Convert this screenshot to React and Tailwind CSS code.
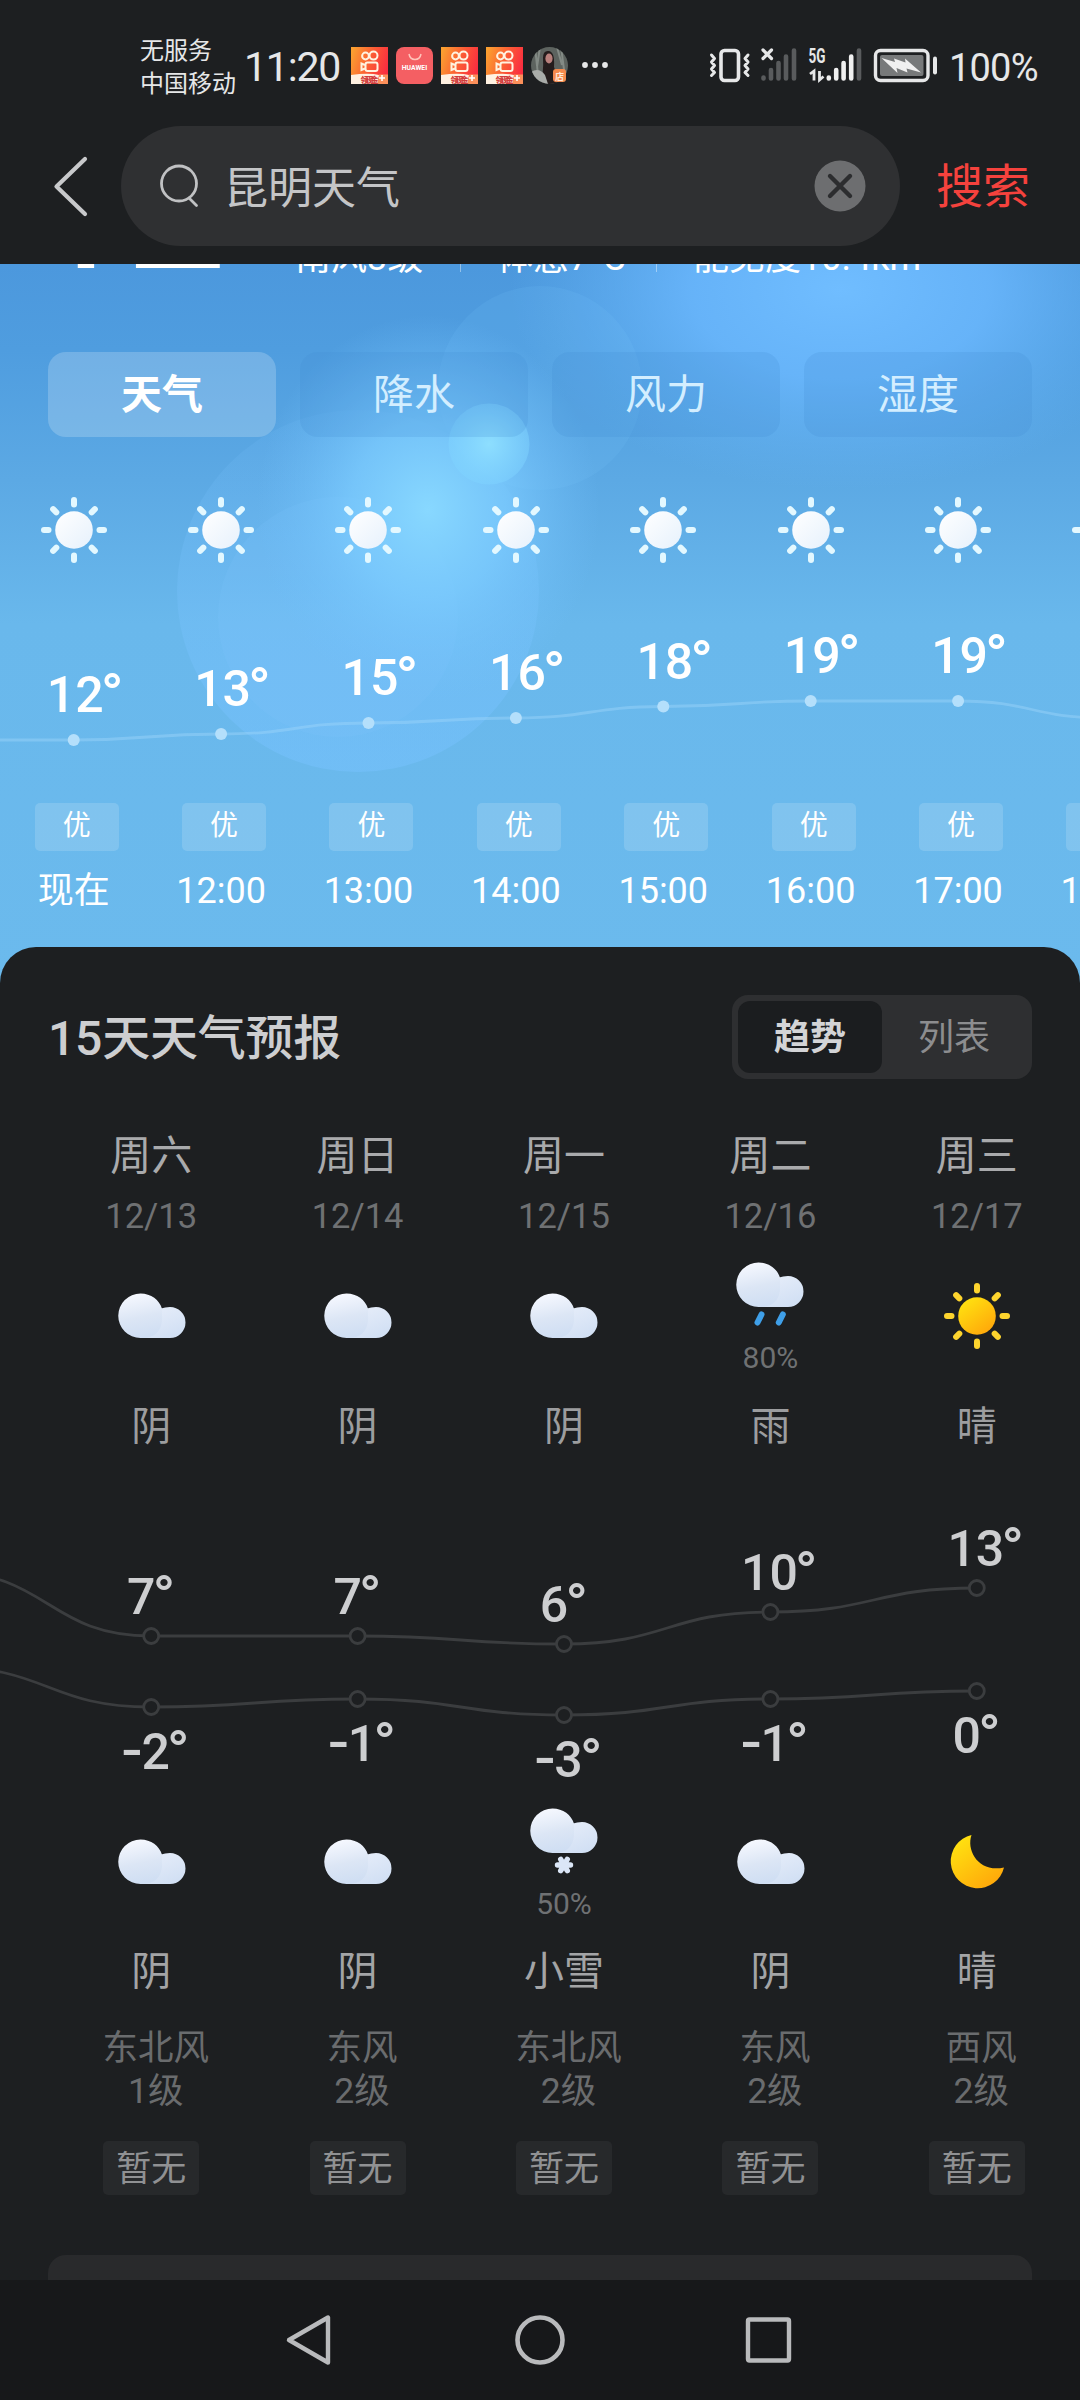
import React from "react";

const HOURS = [
  { time: "现在", temp: 12, y: 740 },
  { time: "12:00", temp: 13, y: 734 },
  { time: "13:00", temp: 15, y: 723 },
  { time: "14:00", temp: 16, y: 718 },
  { time: "15:00", temp: 18, y: 706.5 },
  { time: "16:00", temp: 19, y: 701 },
  { time: "17:00", temp: 19, y: 701 },
  { time: "18:00", temp: 16, y: 718 },
];
const HOUR_STEP = 147.4;

const DAYS = [
  { name: "周六", date: "12/13", day: "cloud", dayText: "阴", hi: "7", hiY: 1636, lo: "-2", loY: 1707, night: "cloud", nightText: "阴", wind: "东北风", level: "1级" },
  { name: "周日", date: "12/14", day: "cloud", dayText: "阴", hi: "7", hiY: 1636, lo: "-1", loY: 1699, night: "cloud", nightText: "阴", wind: "东风", level: "2级" },
  { name: "周一", date: "12/15", day: "cloud", dayText: "阴", hi: "6", hiY: 1644, lo: "-3", loY: 1715, night: "snow", nightChance: "50%", nightText: "小雪", wind: "东北风", level: "2级" },
  { name: "周二", date: "12/16", day: "rain", dayChance: "80%", dayText: "雨", hi: "10", hiY: 1612, lo: "-1", loY: 1699, night: "cloud", nightText: "阴", wind: "东风", level: "2级" },
  { name: "周三", date: "12/17", day: "sun", dayText: "晴", hi: "13", hiY: 1588, lo: "0", loY: 1691, night: "moon", nightText: "晴", wind: "西风", level: "2级" },
];

// Smooth line with horizontal tangents at every point
function curve(points) {
  return points.reduce((d, [x, y], i) => {
    if (i === 0) return `M${x} ${y}`;
    const [px, py] = points[i - 1];
    const mx = (px + x) / 2;
    return `${d} C${mx} ${py} ${mx} ${y} ${x} ${y}`;
  }, "");
}

function Defs() {
  return (
    <svg className="absolute h-0 w-0">
      <defs>
        <linearGradient id="cloudBig" x1="0.3" y1="0" x2="0.5" y2="1">
          <stop offset="0" stopColor="#f7f9ff" />
          <stop offset="0.55" stopColor="#dce6f5" />
          <stop offset="1" stopColor="#cfdef3" />
        </linearGradient>
        <linearGradient id="cloudSmall" x1="0" y1="0" x2="0.6" y2="1">
          <stop offset="0" stopColor="#e9effa" />
          <stop offset="1" stopColor="#d2e0f4" />
        </linearGradient>
        <linearGradient id="sunWhite" x1="0" y1="0" x2="1" y2="1">
          <stop offset="0" stopColor="#ffffff" />
          <stop offset="1" stopColor="#e6f1fc" />
        </linearGradient>
        <linearGradient id="gold" x1="0.2" y1="0.1" x2="0.85" y2="0.95">
          <stop offset="0" stopColor="#ffdf10" />
          <stop offset="1" stopColor="#ffa60a" />
        </linearGradient>
      </defs>
    </svg>
  );
}

function Sun({ white }) {
  return (
    <svg className="h-[70px] w-[70px]" viewBox="-35 -35 70 70">
      <circle r="18.8" fill={white ? "url(#sunWhite)" : "url(#gold)"} />
      <g stroke={white ? "#e3f8ff" : "#fdd42e"} strokeWidth="6" strokeLinecap="round">
        {[0, 45, 90, 135, 180, 225, 270, 315].map((a) => (
          <line key={a} x1="0" x2="0" y1={a % 90 ? -25 : -25.5} y2={a % 90 ? -29.5 : -30} transform={`rotate(${a})`} />
        ))}
      </g>
    </svg>
  );
}

function CloudShape() {
  return (
    <>
      <path d="M52 14a15.5 15.5 0 0 1 0 31H22.500V30L43 15.500Q47 14 52 14z" fill="url(#cloudSmall)" />
      <path d="M22.500 0.500C33 0.500 41.500 7 44 15.800L44 28Q42 45 24 45H22.500a22.250 22.250 0 0 1 0 -44.500z" fill="url(#cloudBig)" />
    </>
  );
}

function Icon({ kind }) {
  if (kind === "sun") return <Sun />;
  if (kind === "moon")
    return (
      <svg className="h-[56px] w-[56px]" viewBox="0 0 56 56">
        <path d="M22.500 1C17 17 30 39 55 33.500A27 27 0 1 1 22.500 1z" fill="url(#gold)" />
      </svg>
    );
  if (kind === "cloud")
    return (
      <svg className="ml-px h-[46px] w-[68px]" viewBox="0 0 68 46">
        <CloudShape />
      </svg>
    );
  return (
    <svg className="h-[70px] w-[68px] shrink-0" viewBox="0 -4 68 70">
      <CloudShape />
      {kind === "rain" ? (
        <g stroke="#3f9fe8" strokeWidth="6" strokeLinecap="round">
          <path d="M25.500 52.500L21.500 60.500M46.800 52.500L42.800 60.500" />
        </g>
      ) : (
        <g stroke="#dbe6f7" strokeWidth="5.400" strokeLinecap="round">
          <path d="M27.500 57H40.500M30.700 51.300L37.300 62.700M37.300 51.300L30.700 62.700" />
        </g>
      )}
    </svg>
  );
}

function KuaishouIcon() {
  return (
    <svg className="h-[37px] w-[37px]" viewBox="0 0 37 37">
      <defs>
        <linearGradient id="ks" x1="0" y1="0.2" x2="1" y2="0.5">
          <stop offset="0" stopColor="#fba030" />
          <stop offset="0.55" stopColor="#fb5a35" />
          <stop offset="1" stopColor="#fa2d40" />
        </linearGradient>
      </defs>
      <rect width="37" height="37" fill="url(#ks)" />
      <g fill="none" stroke="#fff3e0" strokeWidth="2">
        <circle cx="14.5" cy="9" r="3.4" />
        <circle cx="22.5" cy="8.6" r="4" />
        <rect x="14.5" y="15.5" width="12" height="8.5" rx="2" />
        <path d="M14 18L10.5 16.5V23L14 21.5" />
      </g>
      <path d="M0 28Q18 25.500 28 28V37H0z" fill="#fff1e2" />
      <path d="M28 27.500H37V37H26z" fill="#fb8f5a" />
      <path d="M28 31h6M31 28v6" stroke="#fff" strokeWidth="1.600" />
      <text x="9.500" y="35.600" fontSize="8" fontWeight="900" fill="#d23c3c" textLength="18">领现金</text>
    </svg>
  );
}

function StatusBar() {
  return (
    <div className="flex h-[120px] items-start text-[#e6e7e8]">
      <div className="ml-[140px] mt-[35px] flex w-[104px] flex-col text-[24px] leading-[32.500px]">
        <span>无服务</span>
        <span>中国移动</span>
      </div>
      <div className="mt-[42px] w-[107px] whitespace-nowrap text-[41px] leading-[50px] tracking-[-1.200px]">11:20</div>
      <div className="mt-[47px] flex gap-2">
        <KuaishouIcon />
        <div className="flex h-[37px] w-[37px] flex-col items-center rounded-[8px] bg-[#f45f63]">
          <svg className="mt-[6px] h-[8px] w-[14px]" viewBox="0 0 14 8">
            <path d="M1 1Q2 6.500 7 6.500T13 1" fill="none" stroke="#ffc3ba" strokeWidth="1.500" />
          </svg>
          <span className="mt-[3px] text-[6.800px] font-bold leading-[8px] text-white">HUAWEI</span>
        </div>
        <KuaishouIcon />
        <KuaishouIcon />
        <svg className="h-[37px] w-[37px]" viewBox="0 0 37 37">
          <defs>
            <clipPath id="avatar"><circle cx="18.500" cy="18.500" r="18.500" /></clipPath>
          </defs>
          <g clipPath="url(#avatar)">
            <rect width="37" height="37" fill="#5d635f" />
            <path d="M4 0L8 37M9 0L6 20M30 0L34 30M26 0L31 18" stroke="#838a85" strokeWidth="2" />
            <path d="M12 11Q12 3 18 4Q24 5 23 20L29 37H9Q13 26 12 11z" fill="#241c1c" />
            <ellipse cx="18" cy="11.500" rx="3.600" ry="5" fill="#b9807c" />
            <path d="M0 25Q8 20 14 28L17 37H0z" fill="#a9aca9" />
          </g>
          <rect x="22" y="22" width="13" height="13" rx="3" fill="#f58a4d" />
          <text x="24" y="32.500" fontSize="9" fontWeight="700" fill="#ffe9dc">店</text>
        </svg>
      </div>
      <svg className="ml-[12px] mt-[60px] h-[10px] w-[30px]" viewBox="0 0 30 10">
        <g fill="#e6e7e8"><circle cx="5" cy="5" r="2.900" /><circle cx="15" cy="5" r="2.900" /><circle cx="25" cy="5" r="2.900" /></g>
      </svg>
      <svg className="ml-[97px] mt-[45px] h-[40px] w-[232px]" viewBox="708 45 232 40">
        <g fill="none" stroke="#e6e7e8" strokeLinecap="round" strokeLinejoin="round">
          <rect x="722" y="50.500" width="17.500" height="30" rx="3.500" strokeWidth="3.600" />
          <path d="M712.500 55L715.500 58.500L712.500 62L715.500 65.500L712.500 69L715.500 72.500L712.500 75.500M749 55L746 58.500L749 62L746 65.500L749 69L746 72.500L749 75.500" strokeWidth="3" />
          <path d="M764 50L772.500 58.500M772.500 50L764 58.500" strokeWidth="3.200" />
          <rect x="876.500" y="50.500" width="52.500" height="30" rx="5" strokeWidth="3.400" />
          <path d="M936 58.500V72.500" strokeWidth="4" />
        </g>
        <g fill="none" strokeLinecap="round" strokeWidth="4.600" stroke="#595b5d">
          <path d="M764.500 77.500V78.500M772 70V78.500M779.500 63V78.500M787 56.500V78.500M795 50.500V78.500M860 50.500V78.500" />
        </g>
        <path d="M829.800 77.500V78.500M837.200 70V78.500M844.600 63V78.500M852.200 56.500V78.500" stroke="#f0f0f0" strokeWidth="4.600" strokeLinecap="round" />
        <text x="809.500" y="62.500" fontSize="19.500" fontWeight="700" fill="#e6e7e8" textLength="17" lengthAdjust="spacingAndGlyphs">5G</text>
        <path d="M811 74L815 71V80.500M820.500 71V80L824.500 76.500" fill="none" stroke="#e6e7e8" strokeWidth="2.800" />
        <rect x="881" y="55" width="43.500" height="21" rx="2" fill="#77797a" />
        <path d="M882.500 58L896 62L895 58.500L906.500 62.500L906 58.500L922 72.500L907.500 68.500L908.500 72.500L897.500 68L898.500 73z" fill="#f0f0f0" />
      </svg>
      <div className="ml-[10px] mt-[43px] text-[38px] leading-[50px] tracking-[-0.800px]">100%</div>
    </div>
  );
}

function SearchBar() {
  return (
    <div className="flex h-[144px] items-start pt-1.5">
      <svg className="ml-[50px] h-[120px] w-[71px]" viewBox="50 126 71 120">
        <path d="M85 159L56.500 186.500L85 214" fill="none" stroke="#c8c9cb" strokeWidth="4.200" strokeLinecap="round" strokeLinejoin="round" />
      </svg>
      <div className="flex h-[120px] w-[779px] items-center rounded-[60px] bg-[#2f3032] pl-[38px] pr-[34px]">
        <svg className="h-[48px] w-[44px]" viewBox="0 0 44 48">
          <circle cx="20" cy="21.500" r="17.500" fill="none" stroke="#c0c1c3" strokeWidth="2.800" />
          <path d="M30 36L37.500 43.500" stroke="#c0c1c3" strokeWidth="2.800" strokeLinecap="round" />
        </svg>
        <div className="ml-[21px] flex-1 pt-[6px] text-[44px] leading-[60px] text-[#c4c5c7]">昆明天气</div>
        <svg className="h-[52px] w-[52px]" viewBox="0 0 52 52">
          <circle cx="26" cy="26" r="25.500" fill="#6d6e70" />
          <path d="M16 16L36 36M36 16L16 36" stroke="#2c2d2f" strokeWidth="4.400" strokeLinecap="round" />
        </svg>
      </div>
      <div className="ml-[36px] mt-[31px] text-[47px] leading-[60px] text-[#f5423d]">搜索</div>
    </div>
  );
}

function SkyBackdrop() {
  return (
    <svg className="absolute inset-0 h-full w-full" viewBox="0 264 1080 720" preserveAspectRatio="none">
      <defs>
        <linearGradient id="sky" x1="0" y1="0" x2="0" y2="1">
          <stop offset="0" stopColor="#4c98dd" />
          <stop offset="0.12" stopColor="#4f9ddf" />
          <stop offset="0.3" stopColor="#5ca9e4" />
          <stop offset="0.5" stopColor="#69b8ec" />
          <stop offset="1" stopColor="#6bbaed" />
        </linearGradient>
        <radialGradient id="glowRight">
          <stop offset="0" stopColor="#70bdff" />
          <stop offset="0.45" stopColor="#6cb9ff" stopOpacity="0.8" />
          <stop offset="1" stopColor="#66b4f5" stopOpacity="0" />
        </radialGradient>
        <radialGradient id="glowMid">
          <stop offset="0" stopColor="#88d8ff" />
          <stop offset="0.45" stopColor="#7cccff" stopOpacity="0.75" />
          <stop offset="1" stopColor="#70bffb" stopOpacity="0" />
        </radialGradient>
        <radialGradient id="orb">
          <stop offset="0" stopColor="#8fe0ff" stopOpacity="0.95" />
          <stop offset="1" stopColor="#7fd3ff" stopOpacity="0.5" />
        </radialGradient>
        <linearGradient id="bubble" x1="0" y1="0" x2="0" y2="1">
          <stop offset="0" stopColor="#7cc4ff" stopOpacity="0.1" />
          <stop offset="1" stopColor="#77c2ff" stopOpacity="0.5" />
        </linearGradient>
      </defs>
      <rect y="264" width="1080" height="720" fill="url(#sky)" />
      <ellipse cx="840" cy="290" rx="330" ry="200" fill="url(#glowRight)" />
      <circle cx="540" cy="388" r="102" fill="#7fc9ff" opacity="0.13" />
      <circle cx="358" cy="591" r="181" fill="url(#bubble)" />
      <circle cx="338" cy="617" r="120" fill="#80caff" opacity="0.16" />
      <ellipse cx="428" cy="510" rx="172" ry="195" fill="url(#glowMid)" />
      <circle cx="489" cy="444" r="40.500" fill="url(#orb)" />
    </svg>
  );
}

// One temperature label: digits with an enlarged, raised degree sign
function Temp({ x, y, value, fill }) {
  const text = String(value);
  const minus = text.startsWith("-");
  return (
    <text x={x} y={y} textAnchor="middle" fontSize="50" fontWeight="500" fill={fill}>
      {minus && <tspan fontSize="68" fontWeight="400" dy="4">-</tspan>}
      <tspan dy={minus ? -4 : 0}>{minus ? text.slice(1) : text}</tspan>
      <tspan fontSize="60" dx="-3" dy="3">°</tspan>
    </text>
  );
}

function HourlyChart() {
  const pts = HOURS.map((h, i) => [HOUR_STEP * (i + 0.5), h.y]);
  return (
    <svg className="block h-[180px] w-[1080px]" viewBox="0 610 1080 180">
      <path d={curve([[-74, 740], ...pts])} fill="none" stroke="#9dd4fb" strokeOpacity="0.45" strokeWidth="2.800" />
      {HOURS.map((h, i) => (
        <circle key={i} cx={pts[i][0]} cy={h.y} r="6" fill="#b4dffb" />
      ))}
      {HOURS.slice(0, 7).map((h, i) => (
        <Temp key={i} x={pts[i][0] + 11.500} y={h.y - 28} value={h.temp} fill="#fff" />
      ))}
    </svg>
  );
}

function Sky() {
  return (
    <section className="relative h-[720px] overflow-hidden bg-[#6bbaed] text-white">
      <SkyBackdrop />
      <div className="relative">
        <div className="flex h-[88px] items-start overflow-hidden">
          <div className="-mt-[157px] ml-[30px] w-[265px] text-[180px] leading-[200px] tracking-[-6px]">12</div>
          <div className="-mt-[30px] flex items-center whitespace-nowrap text-[36px] leading-[48px]">
            <span className="w-[165px]">南风3级</span>
            <i className="mr-[36px] h-[28px] w-px bg-white/40" />
            <span className="w-[159px]">体感7°C</span>
            <i className="mr-[36px] h-[28px] w-px bg-white/40" />
            <span>能见度10.4km</span>
          </div>
        </div>
        <div className="grid grid-cols-4 gap-6 px-12 text-[41px] leading-[87px]">
          <div className="h-[85px] rounded-[18px] bg-white/20 text-center font-bold">天气</div>
          {["降水", "风力", "湿度"].map((t) => (
            <div key={t} className="h-[85px] rounded-[18px] bg-[#3f8ed2]/20 text-center text-[#d3eeff]">{t}</div>
          ))}
        </div>
        <div className="mt-[58px] flex">
          {HOURS.map((h, i) => (
            <div key={i} className="flex w-[147.400px] shrink-0 justify-center"><Sun white /></div>
          ))}
        </div>
        <div className="mt-[45px]"><HourlyChart /></div>
        <div className="mt-[13px] flex">
          {HOURS.map((h, i) => (
            <div key={i} className="flex w-[147.400px] shrink-0 flex-col items-center">
              <div className="ml-[6px] h-[48px] w-[84px] rounded-[5px] bg-white/15 text-center text-[28px] leading-[45px]">优</div>
              <div className="mt-[15px] text-[36px] leading-[50px]">{h.time}</div>
            </div>
          ))}
        </div>
      </div>
    </section>
  );
}

function Slot({ kind, chance }) {
  return (
    <div className="flex h-[120px] flex-col items-center justify-center">
      <Icon kind={kind} />
      {chance && <div className="mt-[11px] h-[36px] text-[30px] leading-[37px] text-[#6f7173]">{chance}</div>}
    </div>
  );
}

function DailyChart() {
  const x = (i) => 48 + 206.4 * (i + 0.5);
  const hi = DAYS.map((d, i) => [x(i), d.hiY]);
  const lo = DAYS.map((d, i) => [x(i), d.loY]);
  const offset = (t) => (t.length === 1 ? 0 : t[0] === "-" ? 5 : 9);
  return (
    <svg className="block h-[340px] w-[1080px]" viewBox="0 1450 1080 340">
      <g fill="none" stroke="#3b3d3f" strokeWidth="2.800">
        <path d={curve([[-55, 1572], ...hi])} />
        <path d={curve([[-55, 1667], ...lo])} />
        {[...hi, ...lo].map(([cx, cy], i) => (
          <circle key={i} cx={cx} cy={cy} r="7.500" fill="#1d1f21" />
        ))}
      </g>
      {DAYS.map((d, i) => (
        <React.Fragment key={i}>
          <Temp x={x(i) + offset(d.hi)} y={d.hiY - 22} value={d.hi} fill="#cdced0" />
          <Temp x={x(i) + offset(d.lo)} y={d.loY + 61.500} value={d.lo} fill="#cdced0" />
        </React.Fragment>
      ))}
    </svg>
  );
}

function Forecast() {
  return (
    <section className="relative -mt-[37px] h-[1333px] overflow-hidden rounded-t-[36px] bg-[#1d1f21] pt-12">
      <div className="flex h-[84px] items-center justify-between px-12">
        <h2 className="pt-1 text-[48px] font-medium leading-[60px] tracking-[-0.200px] text-[#cdced0]">15天天气预报</h2>
        <div className="flex h-[84px] w-[300px] rounded-[16px] bg-[#2e2f31] p-[6px] text-center text-[36px] leading-[74px]">
          <div className="h-[72px] w-[144px] rounded-[12px] bg-[#1b1d1f] font-bold text-[#d3d4d6]">趋势</div>
          <div className="h-[72px] w-[144px] text-[#8c8d8f]">列表</div>
        </div>
      </div>
      <div className="mt-[46px] grid grid-cols-5 pl-12 text-center">
        {DAYS.map((d) => (
          <div key={d.date}>
            <div className="text-[41px] leading-[62px] text-[#a9aaac]">{d.name}</div>
            <div className="mt-[9px] text-[34.500px] leading-[40px] text-[#6f7173]">{d.date}</div>
            <div className="mt-[20px]"><Slot kind={d.day} chance={d.dayChance} /></div>
            <div className="mt-[24px] text-[40px] leading-[54px] text-[#9c9d9f]">{d.dayText}</div>
          </div>
        ))}
      </div>
      <div className="-mt-1"><DailyChart /></div>
      <div className="mt-[12px] grid grid-cols-5 pl-12 text-center">
        {DAYS.map((d) => (
          <div key={d.date} className="flex flex-col items-center">
            <Slot kind={d.night} chance={d.nightChance} />
            <div className="mt-[23px] text-[40px] leading-[54px] text-[#a3a4a6]">{d.nightText}</div>
            <div className="ml-[9px] mt-[28px] text-[35.500px] leading-[43px] text-[#6a6c6e]">{d.wind}<br />{d.level}</div>
            <div className="mt-[28px] h-[54px] w-[96px] rounded-[5px] bg-[#27292b] text-[35px] leading-[57px] text-[#909193]">暂无</div>
          </div>
        ))}
      </div>
      <div className="mx-12 mt-[60px] h-[80px] rounded-[18px] bg-[#292a2c]" />
    </section>
  );
}

function NavBar() {
  return (
    <nav className="relative flex h-[120px] items-center justify-center gap-[169px] bg-[#17181a]">
      <svg className="h-[60px] w-[60px]" viewBox="-30 -30 60 60" fill="none" stroke="#b9babc" strokeWidth="4.400" strokeLinejoin="round">
        <path d="M17 -22.500V22.500L-22 0z" />
      </svg>
      <svg className="h-[60px] w-[60px]" viewBox="-30 -30 60 60" fill="none" stroke="#b9babc" strokeWidth="4.600">
        <circle r="22.500" />
      </svg>
      <svg className="h-[60px] w-[60px]" viewBox="-30 -30 60 60" fill="none" stroke="#b9babc" strokeWidth="4.400">
        <rect x="-21" y="-20.500" width="41" height="41" rx="1.500" />
      </svg>
    </nav>
  );
}

export default function App() {
  return (
    <div className="relative h-[2400px] w-[1080px] overflow-hidden bg-[#1d1f21] font-[Roboto,'Noto_Sans_CJK_SC',sans-serif]">
      <Defs />
      <StatusBar />
      <SearchBar />
      <Sky />
      <Forecast />
      <NavBar />
    </div>
  );
}
